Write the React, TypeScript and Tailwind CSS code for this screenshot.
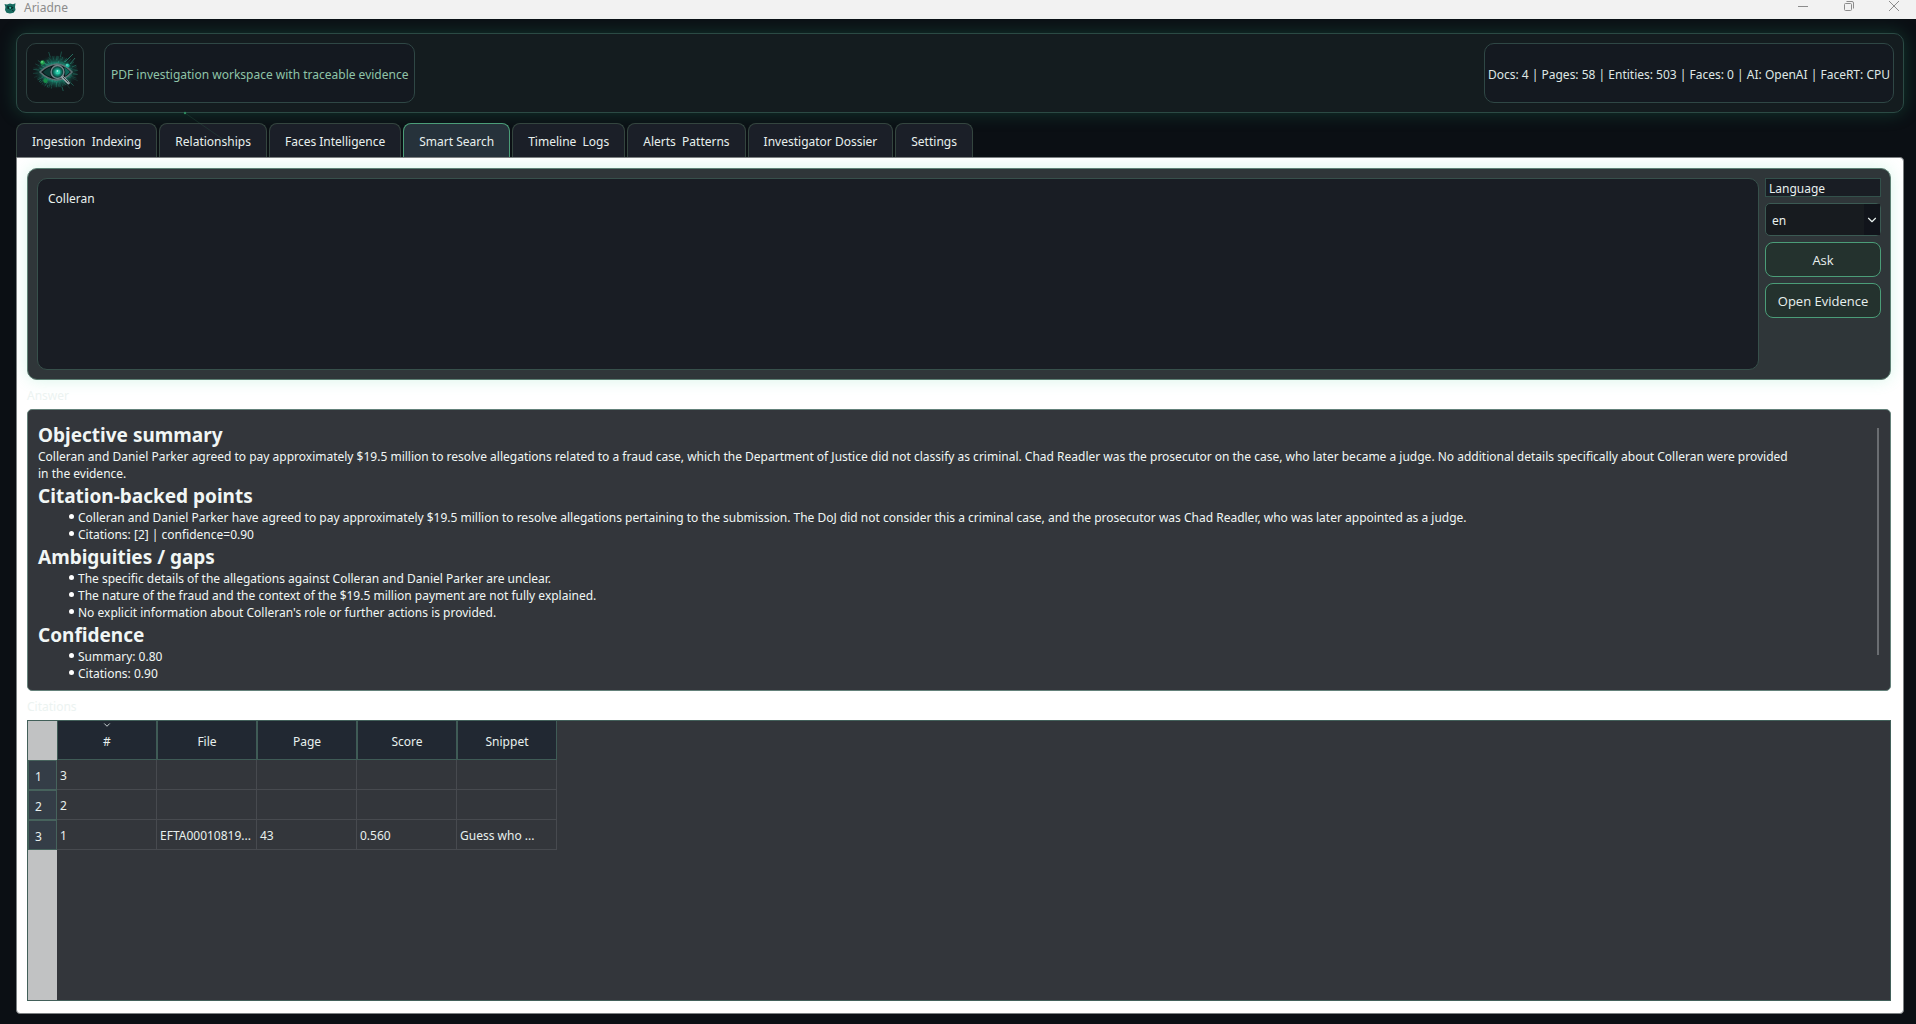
import React, { useState } from "react";
import { ChevronDown } from "lucide-react";

const tabs = [
  "Ingestion  Indexing",
  "Relationships",
  "Faces Intelligence",
  "Smart Search",
  "Timeline  Logs",
  "Alerts  Patterns",
  "Investigator Dossier",
  "Settings",
];

type Section = { title: string; text?: string; points?: string[] };

const sections: Section[] = [
  {
    title: "Objective summary",
    text: "Colleran and Daniel Parker agreed to pay approximately $19.5 million to resolve allegations related to a fraud case, which the Department of Justice did not classify as criminal. Chad Readler was the prosecutor on the case, who later became a judge. No additional details specifically about Colleran were provided in the evidence.",
  },
  {
    title: "Citation-backed points",
    points: [
      "Colleran and Daniel Parker have agreed to pay approximately $19.5 million to resolve allegations pertaining to the submission. The DoJ did not consider this a criminal case, and the prosecutor was Chad Readler, who was later appointed as a judge.",
      "Citations: [2] | confidence=0.90",
    ],
  },
  {
    title: "Ambiguities / gaps",
    points: [
      "The specific details of the allegations against Colleran and Daniel Parker are unclear.",
      "The nature of the fraud and the context of the $19.5 million payment are not fully explained.",
      "No explicit information about Colleran's role or further actions is provided.",
    ],
  },
  { title: "Confidence", points: ["Summary: 0.80", "Citations: 0.90"] },
];

const columns = ["#", "File", "Page", "Score", "Snippet"];
const rows = [
  ["3", "", "", "", ""],
  ["2", "", "", "", ""],
  ["1", "EFTA00010819...", "43", "0.560", "Guess who ..."],
];

const rays = Array.from({ length: 120 }, (_, i) => {
  const a = i * 2.39996;
  const r0 = 6 + ((i * 37) % 12);
  const r1 = r0 + 1 + ((i * 53) % 5);
  return {
    x1: 29 + Math.cos(a) * r0 * 1.15,
    y1: 26 + Math.sin(a) * r0 * 0.9,
    x2: 29 + Math.cos(a) * r1 * 1.15,
    y2: 26 + Math.sin(a) * r1 * 0.95,
    o: 0.1 + ((i * 29) % 10) / 25,
  };
});

function Logo({ className }: { className: string }) {
  return (
    <svg viewBox="4 4 48 46" className={className} aria-hidden="true">
      <defs>
        <radialGradient id="glow" cx="50%" cy="50%" r="50%">
          <stop offset="0" stopColor="#3fe0bc" stopOpacity="0.95" />
          <stop offset="0.55" stopColor="#1c9a80" stopOpacity="0.7" />
          <stop offset="1" stopColor="#0c3c36" stopOpacity="0" />
        </radialGradient>
        <radialGradient id="iris" cx="50%" cy="50%" r="50%">
          <stop offset="0" stopColor="#4fe8c8" />
          <stop offset="0.5" stopColor="#128a75" />
          <stop offset="1" stopColor="#071a1b" />
        </radialGradient>
      </defs>
      <ellipse cx="29" cy="26" rx="22" ry="17" fill="url(#glow)" />
      {rays.map((r, i) => (
        <line key={i} x1={r.x1} y1={r.y1} x2={r.x2} y2={r.y2} stroke="#2fb598" strokeWidth="0.9" opacity={r.o} />
      ))}
      <path d="M38 16L46 8M43 18L48 12M16 17L24 20M19 35L24 31" stroke="#2f927d" strokeWidth="0.7" />
      <path d="M13 26Q20 19 30 18Q39 19 45 26Q38 34 29 34Q20 33 13 26Z" fill="#0a1517" stroke="#5e7073" strokeWidth="1.6" />
      <path d="M16 26Q20 22 24 21Q22 26 24 31Q19 30 16 26Z" fill="#0d3a35" />
      <path d="M37 21Q41 23 43 26Q40 29 38 30Q39 26 37 21Z" fill="#0f6558" />
      <circle cx="30.5" cy="26" r="6.4" fill="url(#iris)" stroke="#71858a" strokeWidth="1.5" />
      <circle cx="31" cy="26" r="2.2" fill="#2fd0ae" />
      <circle cx="30.4" cy="25" r="0.8" fill="#d5fff6" />
      <path d="M35.5 31L41.5 37" stroke="#9aa8ac" strokeWidth="2.6" strokeLinecap="round" />
      <path d="M36 31L41 36" stroke="#3c484c" strokeWidth="1" strokeLinecap="round" />
      <circle cx="15.5" cy="16.5" r="2.2" fill="#1fa14c" />
      <circle cx="15" cy="15.9" r="0.8" fill="#7de895" />
      <circle cx="18.5" cy="34.8" r="2.2" fill="#178f48" />
      <circle cx="40.5" cy="19.5" r="2.1" fill="#1bb59b" />
      <circle cx="40" cy="19" r="0.8" fill="#8df3df" />
    </svg>
  );
}

function TitleBar() {
  return (
    <header className="flex h-[19px] shrink-0 items-start justify-between bg-[#f2f2f2] text-[#8c8c8c]">
      <div className="flex items-center gap-2 pl-1">
        <svg viewBox="0 0 12 12" className="h-3 w-3" aria-hidden="true">
          <path d="M0.5 2L3 2.5L6 1.5L9 2.2L11.5 1.2L11 5L11.5 8L9.5 10.8L6 11.4L2.5 10.8L1 8L1.4 5Z" fill="#176b60" />
          <path d="M2.5 6Q6 3 9.5 5.5Q7 9 2.5 6Z" fill="#082a2b" />
          <path d="M3 4L5 5M8 8L10 9.5" stroke="#0b3534" />
          <circle cx="6.2" cy="5.8" r="1.1" fill="#39c4a6" />
        </svg>
        <span className="text-xs leading-4">Ariadne</span>
      </div>
      <div className="flex">
        <button aria-label="Minimize" className="flex h-3 w-[46px] items-center justify-center">
          <svg viewBox="0 0 10 10" className="h-2.5 w-2.5" fill="none" stroke="currentColor">
            <path d="M0 5.5H10" />
          </svg>
        </button>
        <button aria-label="Restore" className="flex h-3 w-[45px] items-center justify-center">
          <svg viewBox="0 0 10 10" className="h-2.5 w-2.5" fill="none" stroke="currentColor">
            <rect x="0.5" y="2.5" width="7" height="7" rx="1" />
            <path d="M2.5 0.5H8a1.5 1.5 0 0 1 1.5 1.5V7.5" />
          </svg>
        </button>
        <button aria-label="Close" className="flex h-3 w-[45px] items-center justify-center">
          <svg viewBox="0 0 10 10" className="h-2.5 w-2.5" fill="none" stroke="currentColor">
            <path d="M0 0L10 10M10 0L0 10" />
          </svg>
        </button>
      </div>
    </header>
  );
}

function Banner() {
  return (
    <section className="flex h-20 shrink-0 items-stretch rounded-[10px] border border-[#2b4a44] bg-[#141c1f] p-[9px] shadow-[0_0_18px_rgba(40,160,115,0.28)]">
      <div className="flex w-[58px] items-center justify-center rounded-[10px] border border-[#2c403f] bg-[#12181b]">
        <Logo className="h-[46px] w-12" />
      </div>
      <div className="ml-5 flex items-center rounded-[10px] border border-[#2f4745] bg-[#141920] px-1.5 pt-0.5 text-[#8fc4a8]">
        PDF investigation workspace with traceable evidence
      </div>
      <div className="ml-auto flex items-center rounded-[10px] border border-[#2f4745] bg-[#141920] px-[3px] pt-0.5 text-[#dfe7e5]">
        Docs: 4 | Pages: 58 | Entities: 503 | Faces: 0 | AI: OpenAI | FaceRT: CPU
      </div>
    </section>
  );
}

export default function App() {
  const [active, setActive] = useState(3);
  const [query, setQuery] = useState("Colleran");

  return (
    <div className="flex min-h-screen flex-col bg-[#0b0f14] font-['Noto_Sans','Open_Sans',sans-serif] text-xs leading-[17px] text-[#e8f0ee]">
      <TitleBar />
      <div className="flex flex-1 flex-col pt-[14px] pr-3 pb-[10px] pl-4">
        <Banner />

        <nav role="tablist" className="relative mt-[10px] flex gap-0.5">
          <svg
            viewBox="0 0 60 40"
            className="pointer-events-none absolute -top-3 left-[167px] h-10 w-[60px]"
            fill="none"
            aria-hidden="true"
          >
            <path d="M2 2L54 38" stroke="#2c6b50" strokeWidth="0.8" opacity="0.3" />
            <circle cx="2" cy="2" r="1.2" fill="#2f8a5f" />
          </svg>
          {tabs.map((t, i) => (
            <button
              key={t}
              role="tab"
              aria-selected={i === active}
              onClick={() => setActive(i)}
              className={
                i === active
                  ? "h-[34px] rounded-t-lg border border-b-0 border-[#4b9d78] bg-[#26323b] px-[15px] pt-0.5 whitespace-pre"
                  : "h-[34px] rounded-t-lg border border-b-0 border-[#34453f] bg-[#1b1f28] px-[15px] pt-0.5 whitespace-pre"
              }
            >
              {t}
            </button>
          ))}
        </nav>

        <main className="flex flex-1 flex-col rounded-[4px] rounded-tl-none border border-[#7d8183] bg-white pt-[10px] pr-3 pb-3 pl-[10px]">
          <section className="flex gap-[6px] rounded-[10px] border border-[#5c7f73] bg-[#2f3639] p-[9px] shadow-[0_0_16px_rgba(60,210,150,0.2)]">
            <textarea
              aria-label="Question"
              value={query}
              onChange={(e) => setQuery(e.target.value)}
              className="h-48 flex-1 resize-none rounded-[10px] border border-[#37504b] bg-[#191d24] px-2.5 py-[11px] outline-none"
            />
            <div className="flex w-[116px] flex-col gap-[6px]">
              <label htmlFor="language" className="h-[19px] border border-[#33514b] bg-[#191d24] pt-px pl-[3px]">
                Language
              </label>
              <div className="relative">
                <select
                  id="language"
                  className="h-[33px] w-full appearance-none rounded-[5px] border border-[#3b5a53] bg-[#171b1f] px-1.5 pt-0.5 outline-none"
                >
                  <option>en</option>
                  <option>pt</option>
                </select>
                <span className="pointer-events-none absolute inset-y-px right-px flex w-4 items-center justify-center bg-[#11141b]">
                  <ChevronDown className="h-3.5 w-3.5" />
                </span>
              </div>
              <button className="h-[35px] rounded-lg border border-[#4b9d78] bg-[#24322e] pt-0.5 font-['Open_Sans','Noto_Sans',sans-serif] text-[13px] font-medium">
                Ask
              </button>
              <button className="h-[35px] rounded-lg border border-[#4b9d78] bg-[#24322e] pt-0.5 font-['Open_Sans','Noto_Sans',sans-serif] text-[13px] font-medium">
                Open Evidence
              </button>
            </div>
          </section>

          <h2 className="mt-[7px] mb-[5px] text-[#ecf3f1]">Answer</h2>
          <section className="flex items-stretch rounded-[5px] border border-[#64817a] bg-[#33363b] pt-[11px] pr-[11px] pb-2 pl-[10px] text-[#f1f6f5]">
            <div className="min-w-0 flex-1 pr-[84px]">
              {sections.map((s) => (
                <div key={s.title}>
                  <h3 className="pt-0.5 text-[19px] leading-[25px] font-bold">{s.title}</h3>
                  {s.text && <p>{s.text}</p>}
                  {s.points && (
                    <ul>
                      {s.points.map((p) => (
                        <li key={p} className="flex pl-[31px]">
                          <span className="mt-[5px] mr-[4px] h-[5px] w-[5px] shrink-0 rounded-full bg-white" />
                          <span>{p}</span>
                        </li>
                      ))}
                    </ul>
                  )}
                </div>
              ))}
            </div>
            <div className="mt-[7px] mb-[27px] w-0.5 bg-[#6a6d71]" />
          </section>

          <h2 className="mt-[7px] mb-[5px] text-[#ecf3f1]">Citations</h2>
          <section className="flex flex-1 border border-[#42605a] bg-[linear-gradient(to_right,#c1c2c3_29px,#33363b_29px)]">
            <table className="w-[529px] table-fixed border-separate border-spacing-0 self-start">
              <colgroup>
                <col className="w-[29px]" />
                <col />
                <col />
                <col />
                <col />
                <col />
              </colgroup>
              <thead>
                <tr className="h-[39px]">
                  <td />
                  {columns.map((c) => (
                    <th
                      key={c}
                      scope="col"
                      className="relative border border-t-0 border-[#3f5b56] bg-[#212832] p-0 pt-0.5 font-normal"
                    >
                      {c === "#" && (
                        <ChevronDown className="absolute -top-px left-1/2 h-2.5 w-2.5 -translate-x-1/2" />
                      )}
                      {c}
                    </th>
                  ))}
                </tr>
              </thead>
              <tbody>
                {rows.map((r, i) => (
                  <tr key={i} className="h-[30px]">
                    <th scope="row" className="border border-[#46625c] bg-[#343d47] p-0 pt-0.5 pr-2 font-normal">
                      {i + 1}
                    </th>
                    {r.map((c, j) => (
                      <td
                        key={j}
                        className="border-r border-b border-[#474a4f] bg-[#33363b] p-0 pt-0.5 pl-[3px] whitespace-nowrap"
                      >
                        {c}
                      </td>
                    ))}
                  </tr>
                ))}
              </tbody>
            </table>
          </section>
        </main>
      </div>
    </div>
  );
}
